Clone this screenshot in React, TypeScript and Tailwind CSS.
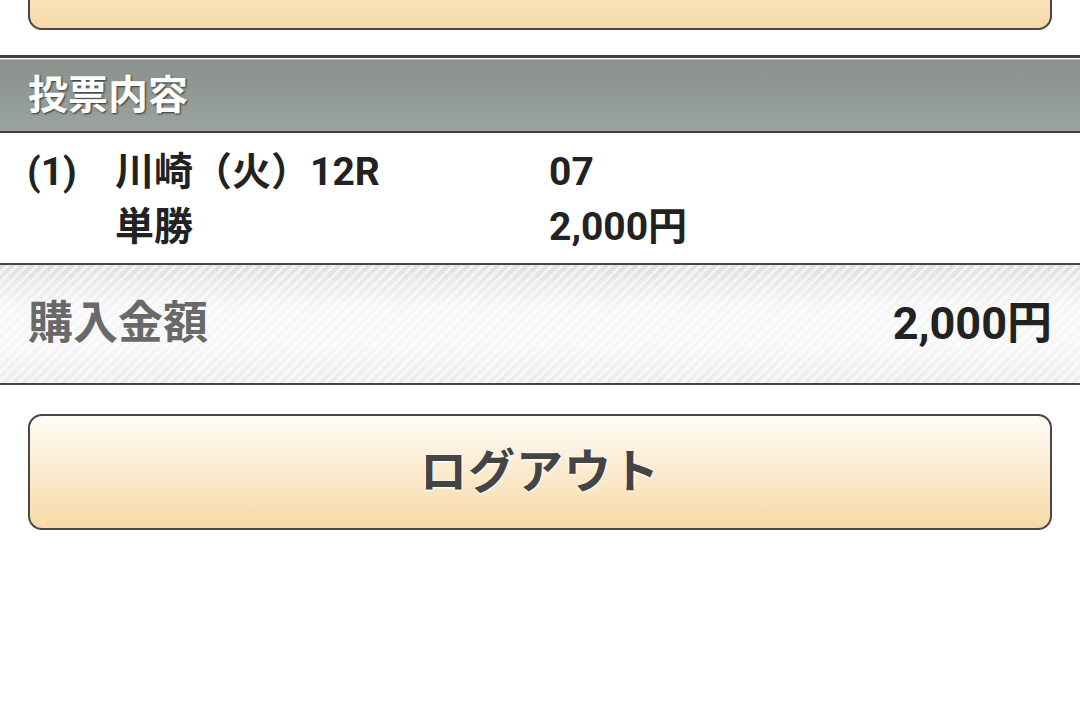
import React from 'react';

const font = "font-['Roboto','Noto_Sans_CJK_JP',sans-serif]";

function OrangeButton({ label, className = '' }: { label?: string; className?: string }) {
  return (
    <div
      className={`mx-[28px] h-[116px] rounded-[14px] border-2 border-[#4a4744] bg-gradient-to-b from-[#fffbf6] to-[#f7daa6] flex items-center justify-center ${className}`}
    >
      {label && (
        <span className="text-[47px] font-bold text-[#444] tracking-[1px] [text-shadow:0_0_3px_#fff,0_1px_2px_#fff]">
          {label}
        </span>
      )}
    </div>
  );
}

export default function App() {
  return (
    <div className={`w-[1080px] h-[715px] overflow-hidden bg-white ${font}`}>
      <OrangeButton className="-mt-[86px]" />

      {/* 投票内容 header */}
      <div className="mt-[25px] border-t-[3px] border-[#414141]">
        <div className="h-px bg-white" />
        <div className="h-px bg-[#b4b6c4]" />
        <div className="h-[73px] bg-gradient-to-b from-[#8a908b] to-[#9ba49f] flex items-center pl-[28px] border-b-2 border-[#3e3e3e]">
          <span className="text-[40px] font-bold text-white [text-shadow:1px_1px_2px_#333]">投票内容</span>
        </div>
      </div>

      {/* bet rows */}
      <div className="pt-[12px] pb-[8px] pl-[27px] text-[39px] font-bold text-[#222] leading-[55px]">
        <div className="flex">
          <div className="w-[88px]">(1)</div>
          <div className="w-[434px]">川崎（火）12R</div>
          <div>07</div>
        </div>
        <div className="flex">
          <div className="w-[88px]" />
          <div className="w-[434px]">単勝</div>
          <div>2,000円</div>
        </div>
      </div>

      {/* 購入金額 */}
      <div className="border-y-2 border-[#444] h-[122px] flex items-center justify-between px-[28px] bg-[#f2f2f2] [background-image:repeating-linear-gradient(-45deg,rgba(255,255,255,0.55)_0px,rgba(255,255,255,0.55)_3px,transparent_3px,transparent_7px),linear-gradient(#e0e0e0,#f6f6f6_35%,#f6f6f6_70%,#ececec)]">
        <span className="text-[45px] font-bold text-[#696969] [text-shadow:0_1px_1px_#fff]">購入金額</span>
        <span className="text-[45px] font-bold text-[#222]">2,000円</span>
      </div>

      <OrangeButton label="ログアウト" className="mt-[29px]" />
    </div>
  );
}
